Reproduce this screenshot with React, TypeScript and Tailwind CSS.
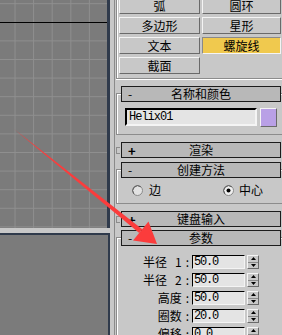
import React from "react";

const cjk = "font-['Noto_Sans_CJK_SC','Noto_Sans',sans-serif]";
const mono = "font-['Liberation_Mono',monospace]";

const gridX = [15, 33.6, 52.2, 70.8, 89.4];
const gridY = [3.7, 40.9, 59.5, 78.1, 96.7, 115.3, 133.9, 152.5, 171.1, 189.7, 208.3, 226.9];

function Btn({ label, active }: { label?: string; active?: boolean }) {
  if (!label) return <div />;
  return (
    <div
      className={`h-[17px] flex items-center justify-center text-[12px] leading-none text-black ${cjk} ${
        active
          ? "bg-[#f0c94e] border border-t-[#8a8a8a] border-l-[#8a8a8a] border-r-[#f4f4f4] border-b-[#f4f4f4]"
          : "bg-[#c8c8c8] border border-t-[#f4f4f4] border-l-[#f4f4f4] border-r-[#6a6a6a] border-b-[#6a6a6a]"
      }`}
    >
      {label}
    </div>
  );
}

function Header({ sign, title }: { sign: string; title: string }) {
  return (
    <div className={`h-[16px] w-[160px] bg-[#b8b8b8] border border-[#1c1c1c] grid grid-cols-[20px_1fr_20px] items-center text-[12px] leading-none text-black ${cjk}`}>
      <span className={`pl-[6px] ${sign === "+" ? "font-bold text-[13px]" : ""}`}>{sign}</span>
      <span className="text-center">{title}</span>
      <span />
    </div>
  );
}

function Collapsed({ title }: { title: string }) {
  return (
    <div className="flex items-center">
      <div className="w-[4px] h-[7px] border-l border-t border-b border-[#8c8c8c]" />
      <div className="ml-[1px]">
        <Header sign="+" title={title} />
      </div>
    </div>
  );
}

function Radio({ checked }: { checked?: boolean }) {
  return (
    <svg width="11" height="11" viewBox="0 0 11 11">
      <circle cx="5.5" cy="5.5" r="5" fill={checked ? "#f0f0f0" : "#e2e2e2"} stroke="#8a8a8a" />
      <path d="M1.8 8.8 A5 5 0 0 1 8.8 1.8" fill="none" stroke="#5a5a5a" />
      {checked && <circle cx="5.5" cy="5.5" r="2" fill="#000" />}
    </svg>
  );
}

function Spinner() {
  return (
    <div className="h-[14px] w-[12px] flex flex-col bg-[#c8c8c8] border border-t-[#f4f4f4] border-l-[#f4f4f4] border-r-[#6a6a6a] border-b-[#6a6a6a]">
      <div className="flex-1 flex items-center justify-center border-b border-[#8a8a8a]">
        <svg width="5" height="3" viewBox="0 0 5 3">
          <path d="M2.5 0 L5 3 L0 3 Z" fill="#000" />
        </svg>
      </div>
      <div className="flex-1 flex items-center justify-center">
        <svg width="5" height="3" viewBox="0 0 5 3">
          <path d="M0 0 L5 0 L2.5 3 Z" fill="#000" />
        </svg>
      </div>
    </div>
  );
}

function Param({ label, num, value }: { label: string; num?: string; value: string }) {
  return (
    <>
      <div className={`flex justify-end pr-[1px] text-[12px] leading-none text-black ${cjk}`}>
        <span>{label}</span>
        {num && <span className="ml-[8px]">{num}</span>}
        <span className="ml-[4px]">:</span>
      </div>
      <div className={`h-[14px] bg-[#e4e4e4] border border-t-black border-l-black border-r-[#f4f4f4] border-b-[#f4f4f4] pl-[1px] flex items-center text-[12px] tracking-[-1.2px] leading-none text-black ${mono}`}>
        {value}
      </div>
      <Spinner />
    </>
  );
}

const frame = "w-[170px] border border-r-0 border-[#8c8c8c] shadow-[inset_1px_1px_0_#fff]";

export default function App() {
  return (
    <div className="relative w-[282px] h-[335px] overflow-hidden flex bg-[#c8c8c8]">
      {/* viewports */}
      <div className="w-[110px] shrink-0 flex flex-col">
        <div className="h-[228px] bg-[#7b7b7b] border-r-[3px] border-[#2f3a4b]">
          <svg width="107" height="228" viewBox="0 0 107 228">
            {gridX.map((x) => (
              <line key={"x" + x} x1={x} y1="0" x2={x} y2="228" stroke="#8f8f8f" strokeWidth="1" />
            ))}
            {gridY.map((y) => (
              <line key={"y" + y} x1="0" y1={y} x2="107" y2={y} stroke="#8f8f8f" strokeWidth="1" />
            ))}
            <line x1="0" y1="22.5" x2="107" y2="22.5" stroke="#000" strokeWidth="1" />
          </svg>
        </div>
        <div className="h-[5px]" />
        <div className="flex-1 bg-[#7b7b7b] border-t-2 border-r-2 border-[#2f3a4b]" />
      </div>

      {/* command panel */}
      <div className="flex-1 flex">
        <div className="w-[4px]" />
        <div className="w-px bg-[#8a8a8a]" />
        <div className="w-px" />
        <div className="flex-1 flex flex-col">
          {/* object type */}
          <div className="w-[170px] border-l border-b border-[#8c8c8c] shadow-[inset_1px_0_0_#fff,0_1px_0_#fff] pb-[4px]">
            <div className="-mt-[3px] ml-[2px] grid grid-cols-[81px_79px] gap-x-[2px] gap-y-[3px]">
              <Btn label="弧" />
              <Btn label="圆环" />
              <Btn label="多边形" />
              <Btn label="星形" />
              <Btn label="文本" />
              <Btn label="螺旋线" active />
              <Btn label="截面" />
              <Btn />
            </div>
          </div>

          {/* name and color */}
          <div className={`${frame} mt-[14px] pb-[7px]`}>
            <div className="-mt-[8px] ml-[4px]">
              <Header sign="-" title="名称和颜色" />
            </div>
            <div className="mt-[6px] ml-[8px] flex items-start gap-[3px]">
              <div className={`h-[18px] w-[132px] bg-[#e4e4e4] border-2 border-t-black border-l-black border-r-[#f4f4f4] border-b-[#f4f4f4] pl-[2px] flex items-center text-[12px] tracking-[-1px] leading-none text-black ${mono}`}>
                Helix01
              </div>
              <div className="h-[19px] w-[17px] bg-[#b9a0e6] border border-t-[#f4f4f4] border-l-[#f4f4f4] border-r-[#6a6a6a] border-b-[#6a6a6a]" />
            </div>
          </div>

          <div className="mt-[7px]">
            <Collapsed title="渲染" />
          </div>

          {/* creation method */}
          <div className={`${frame} mt-[11px] pb-[7px]`}>
            <div className="-mt-[8px] ml-[4px]">
              <Header sign="-" title="创建方法" />
            </div>
            <div className={`mt-[6px] h-[12px] flex items-center text-[12px] leading-none text-black ${cjk}`}>
              <div className="ml-[15px] flex items-center gap-[6px]">
                <Radio />
                <span>边</span>
              </div>
              <div className="ml-[62px] flex items-center gap-[5px]">
                <Radio checked />
                <span>中心</span>
              </div>
            </div>
          </div>

          <div className="mt-[7px]">
            <Collapsed title="键盘输入" />
          </div>

          {/* parameters */}
          <div className={`${frame} mt-[10px] pb-[7px]`}>
            <div className="-mt-[8px] ml-[4px]">
              <Header sign="-" title="参数" />
            </div>
            <div className="mt-[9px] grid grid-cols-[73px_53px_12px] gap-x-[2px] gap-y-[4px] items-center">
              <Param label="半径" num="1" value="50.0" />
              <Param label="半径" num="2" value="50.0" />
              <Param label="高度" value="50.0" />
              <Param label="圈数" value="20.0" />
              <Param label="偏移" value="0.0" />
            </div>
          </div>
        </div>
      </div>

      {/* red arrow annotation */}
      <svg className="absolute left-0 top-0 pointer-events-none" width="282" height="335" viewBox="0 0 282 335">
        <polygon points="14,129 142.3,229.2 139.2,233" fill="#fb3c3c" />
        <polygon points="157,244 133,240.5 148.5,221.5" fill="#fb3c3c" />
      </svg>
    </div>
  );
}
